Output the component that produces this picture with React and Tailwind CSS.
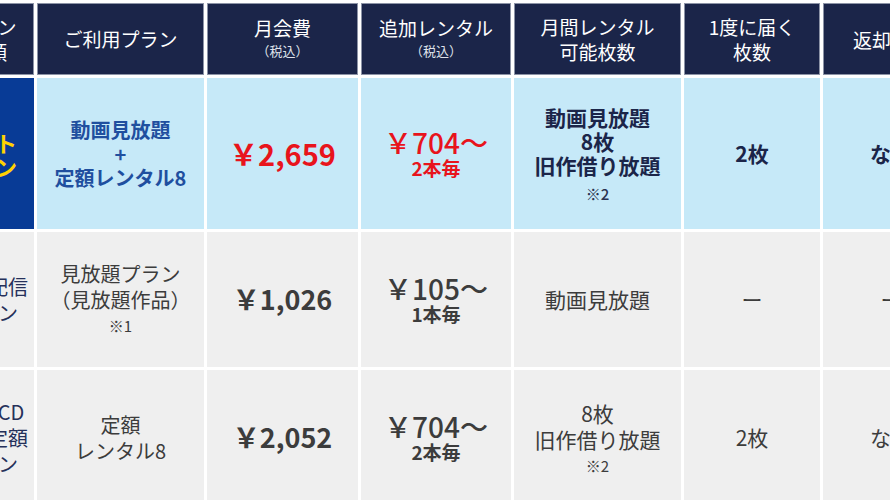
import React from 'react'

// 料金比較テーブル（左右がはみ出した状態で表示）
const HEAD = 'bg-[#1b2549] border border-[#8c93a6] text-white flex flex-col items-center justify-center text-center'
const BLUE = 'bg-[#c6e9f8] flex flex-col items-center justify-center text-center'
const GRAY = 'bg-[#efefef] flex flex-col items-center justify-center text-center text-[#3c3c3c]'

export default function App() {
  return (
    <div className="w-[890px] h-[500px] overflow-hidden bg-white font-['Noto_Sans_CJK_JP','Noto_Sans',sans-serif]">
      <div className="ml-[-58px] pt-[3px] grid grid-cols-[92px_167px_151px_150px_167px_136px_136px] grid-rows-[72px_151px_135px_135px] gap-[3px] w-max">
        {/* ヘッダー */}
        <div className={HEAD + ' text-[19px] leading-[25px]'}>
          <span>プラン</span>
          <span>種類</span>
        </div>
        <div className={HEAD + ' text-[19px]'}>ご利用プラン</div>
        <div className={HEAD}>
          <span className="text-[19px] leading-[24px]">月会費</span>
          <span className="text-[13px] leading-[22px] text-[#dfe2ea]">（税込）</span>
        </div>
        <div className={HEAD}>
          <span className="text-[19px] leading-[24px]">追加レンタル</span>
          <span className="text-[13px] leading-[22px] text-[#dfe2ea]">（税込）</span>
        </div>
        <div className={HEAD + ' text-[19px] leading-[25px]'}>
          <span>月間レンタル</span>
          <span>可能枚数</span>
        </div>
        <div className={HEAD + ' text-[19px] leading-[25px]'}>
          <span>1度に届く</span>
          <span>枚数</span>
        </div>
        <div className={HEAD + ' text-[19px] leading-[25px]'}>
          <span>返却期限</span>
        </div>

        {/* セットプラン */}
        <div className="bg-[#083b96] flex flex-col items-center justify-center text-center text-[#ffd200] font-bold text-[22px] leading-[24px] pr-[8px]">
          <span>セット</span>
          <span>プラン</span>
        </div>
        <div className={BLUE + ' text-[#1f4f9f] font-bold text-[20px] leading-[24px]'}>
          <span>動画見放題</span>
          <span>+</span>
          <span>定額レンタル8</span>
        </div>
        <div className={BLUE + ' text-[#e8141c] font-bold text-[29px]'}>￥2,659</div>
        <div className={BLUE + ' text-[#e8141c]'}>
          <span className="text-[28px] leading-[28px] font-medium">￥704～</span>
          <span className="text-[19px] leading-[24px] font-bold">2本毎</span>
        </div>
        <div className={BLUE + ' text-[#1b2549] font-bold text-[21px] leading-[24px] pt-[8px]'}>
          <span>動画見放題</span>
          <span>8枚</span>
          <span>旧作借り放題</span>
          <span className="text-[15px] leading-[34px] font-medium text-[#2a3350]">※2</span>
        </div>
        <div className={BLUE + ' text-[#1b2549] font-bold text-[21px]'}>2枚</div>
        <div className={BLUE + ' text-[#1b2549] font-bold text-[21px]'}>なし</div>

        {/* 動画配信プラン */}
        <div className={GRAY + ' text-[#25305a] text-[20px] leading-[26px]'}>
          <span>動画配信</span>
          <span>プラン</span>
        </div>
        <div className={GRAY + ' text-[20px] leading-[26px]'}>
          <span>見放題プラン</span>
          <span>（見放題作品）</span>
          <span className="text-[15px] leading-[26px]">※1</span>
        </div>
        <div className={GRAY + ' font-bold text-[27px]'}>￥1,026</div>
        <div className={GRAY}>
          <span className="text-[28px] leading-[28px] font-medium">￥105～</span>
          <span className="text-[19px] leading-[24px] font-bold">1本毎</span>
        </div>
        <div className={GRAY + ' text-[21px]'}>動画見放題</div>
        <div className={GRAY + ' text-[21px]'}>ー</div>
        <div className={GRAY + ' text-[21px]'}>ー</div>

        {/* 宅配レンタルプラン */}
        <div className={GRAY + ' text-[#25305a] text-[20px] leading-[26px]'}>
          <span>DVD/CD</span>
          <span>宅配定額</span>
          <span>プラン</span>
        </div>
        <div className={GRAY + ' text-[20px] leading-[26px]'}>
          <span>定額</span>
          <span>レンタル8</span>
        </div>
        <div className={GRAY + ' font-bold text-[27px]'}>￥2,052</div>
        <div className={GRAY}>
          <span className="text-[28px] leading-[28px] font-medium">￥704～</span>
          <span className="text-[19px] leading-[24px] font-bold">2本毎</span>
        </div>
        <div className={GRAY + ' text-[21px] leading-[26px] pt-[4px]'}>
          <span>8枚</span>
          <span>旧作借り放題</span>
          <span className="text-[15px] leading-[28px]">※2</span>
        </div>
        <div className={GRAY + ' text-[21px]'}>2枚</div>
        <div className={GRAY + ' text-[21px]'}>なし</div>
      </div>
    </div>
  )
}
